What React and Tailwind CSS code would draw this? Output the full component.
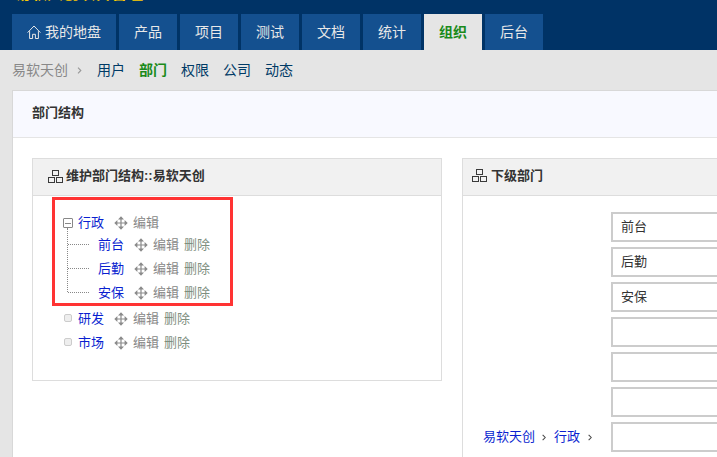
import React from "react";

const font = { fontFamily: '"Liberation Sans","Noto Sans CJK SC",sans-serif' };

function Move() {
  return (
    <svg viewBox="0 0 14 14" className="w-[14px] h-[14px] shrink-0" fill="#8a8a8a" stroke="none">
      <path d="M7 .3 10 3.4H4zM7 13.7 4 10.6h6zM.3 7l3.1-3v6zM13.7 7l-3.1 3V4z" />
      <path d="M6.4 3h1.2v8H6.4zM3 6.4h8v1.2H3z" />
    </svg>
  );
}

function Sitemap() {
  return (
    <svg viewBox="0 0 15 13" className="w-[15px] h-[13px] shrink-0" fill="none" stroke="#3a3a3a" strokeWidth="1">
      <rect x="4.5" y="0.5" width="6" height="5" />
      <rect x="0.5" y="7.5" width="6" height="5" />
      <rect x="8.5" y="7.5" width="6" height="5" />
    </svg>
  );
}

function Chevron({ color, className = "" }) {
  return (
    <svg viewBox="0 0 5 8" className={"h-[7px] shrink-0 " + className} fill="none" stroke={color} strokeWidth="1.3">
      <path d="M.8.8 4 4 .8 7.2" />
    </svg>
  );
}

function Row({ name, del, indent, box, line, className = "h-6" }) {
  return (
    <div className={"flex items-center relative " + className + " " + (indent ? "pl-[65px]" : "pl-[45px]")}>
      {box === "minus" && (
        <span className="absolute left-[30px] top-[5px] w-[10px] h-[10px] border border-[#888] rounded-[1px] flex items-center justify-center">
          <span className="w-[6px] h-px bg-[#888]"></span>
        </span>
      )}
      {box === "plain" && (
        <span className="absolute left-[31px] top-[7px] w-2 h-2 border border-[#ccc] bg-[#eee] rounded-[2px]"></span>
      )}
      {line && <span className="absolute left-[35px] top-[11px] w-[21px] border-t border-dotted border-[#888]"></span>}
      <span className="text-[#0a1fd0] w-[27px] mr-[9px]">{name}</span>
      <Move />
      <span className="text-[#888] ml-[5px] mr-[5px]">编辑</span>
      {del && <span className="text-[#7f8f7f]">删除</span>}
    </div>
  );
}

const tabs = ["产品", "项目", "测试", "文档", "统计"];

export default function App() {
  return (
    <div style={font} className="w-[717px] h-[457px] overflow-hidden bg-[#e5e5e5] text-[13px] leading-5 relative">
      <header className="h-[50px] bg-[#003366] flex flex-col">
        <div className="h-[14px] overflow-hidden pl-[15px]">
          <div className="text-[#ffcc00] font-bold text-[16px] leading-5 -mt-[16px] h-[30px]">易软天创项目管理</div>
        </div>
        <nav className="flex gap-[3px] pl-3 h-9 text-[14px] text-[#e8e8e8]">
          <div className="w-[104px] bg-[#14508f] flex items-center justify-center gap-1 pb-px">
            <svg viewBox="0 0 14 14" className="w-[14px] h-[14px]" fill="none" stroke="#e8e8e8" strokeWidth="1">
              <path d="M.6 7.6 7 1l6.4 6.6M2.6 6.2v7.3h3V9.3h2.8v4.2h3V6.2" />
            </svg>
            <span>我的地盘</span>
          </div>
          {tabs.map((t) => (
            <div key={t} className="w-[58px] bg-[#14508f] flex items-center justify-center pb-px">{t}</div>
          ))}
          <div className="w-[58px] bg-[#e5e5e5] text-[#1a8a1a] font-bold flex items-center justify-center pb-px">组织</div>
          <div className="w-[58px] bg-[#14508f] flex items-center justify-center pb-px">后台</div>
        </nav>
      </header>

      <div className="h-10 flex items-center pl-3 text-[14px]">
        <span className="text-[#888]">易软天创</span>
        <Chevron color="#999" className="w-[5px] ml-[9px] mr-[15px]" />
        <div className="flex gap-[14px] text-[#003a66]">
          <span>用户</span>
          <span className="text-[#1a8a1a] font-bold">部门</span>
          <span>权限</span>
          <span>公司</span>
          <span>动态</span>
        </div>
      </div>

      <main className="ml-3 bg-white border-t border-l border-[#d8d8d8] h-[367px] overflow-hidden">
        <div className="h-[47px] bg-[#f8f9ff] border-b border-[#e5e5e5] flex items-center pl-[19px] pb-[2px] font-bold text-[#333]">部门结构</div>
        <div className="flex pt-5 pl-[19px] gap-5">
          <section className="w-[410px] h-[223px] shrink-0 border border-[#ddd] relative">
            <div className="h-[37px] bg-[#f1f1f1] border-b border-[#ddd] flex items-center pl-[15px] pb-[2px] gap-[3px] font-bold text-[#333]">
              <Sitemap />
              <span>维护部门结构::易软天创</span>
            </div>
            <span className="absolute left-[34px] top-[69px] h-[64px] border-l border-dotted border-[#888]"></span>
            <div className="pt-[17px]">
              <Row name="行政" box="minus" className="h-5" />
              <Row name="前台" del indent line />
              <Row name="后勤" del indent line />
              <Row name="安保" del indent line />
              <Row name="研发" del box="plain" className="h-6 mt-[2px]" />
              <Row name="市场" del box="plain" />
            </div>
          </section>
          <section className="w-[400px] shrink-0 border border-[#ddd] h-[320px]">
            <div className="h-[37px] bg-[#f1f1f1] border-b border-[#ddd] flex items-center pl-[9px] pb-[3px] gap-[4px] font-bold text-[#333]">
              <Sitemap />
              <span>下级部门</span>
            </div>
            <div className="pt-[16px] flex flex-col gap-[5px]">
              {["前台", "后勤", "安保", "", "", "", ""].map((v, i) => (
                <div key={i} className="flex items-center justify-end h-[30px]">
                  {i === 6 && (
                    <div className="flex text-[#0a1fd0] items-center mr-[19px]">
                      <span>易软天创</span>
                      <Chevron color="#444" className="w-1 ml-[7px] mr-2" />
                      <span>行政</span>
                      <Chevron color="#444" className="w-1 ml-2" />
                    </div>
                  )}
                  <div className="w-[250px] h-[30px] border-2 border-[#ccc] border-r-0 pl-[8px] flex items-center text-[#333] bg-white">{v}</div>
                </div>
              ))}
            </div>
          </section>
        </div>
      </main>

      <div className="absolute left-[52px] top-[197px] w-[181px] h-[109px] border-[3px] border-[#ff3333]"></div>
    </div>
  );
}
